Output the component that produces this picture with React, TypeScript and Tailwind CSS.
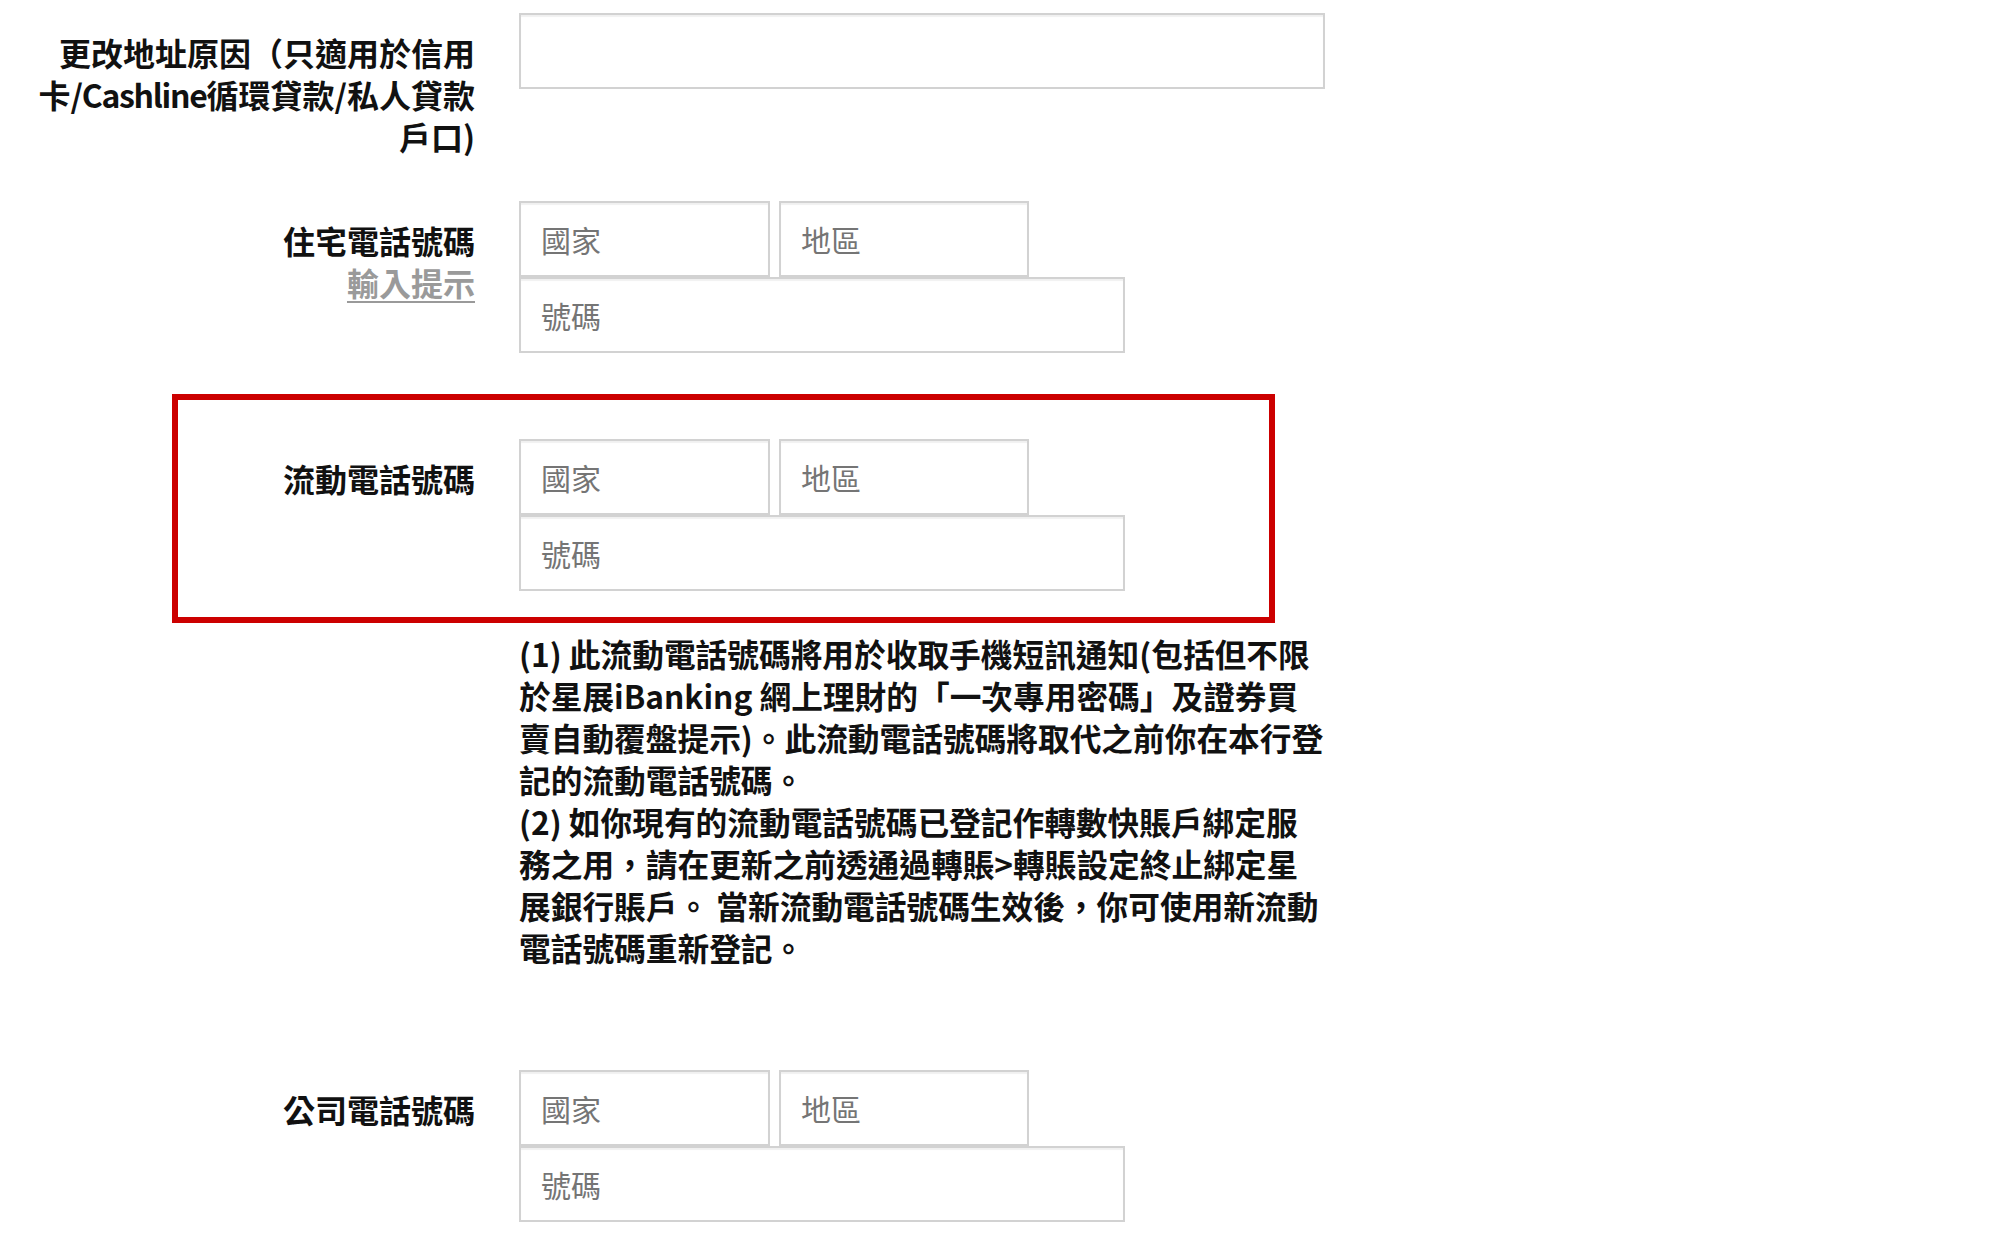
import React from "react";

const font = { fontFamily: '"Noto Sans CJK TC", "Noto Sans", sans-serif' };

const Box = ({ placeholder, className }: { placeholder?: string; className: string }) => (
  <div
    className={`h-[76px] border-2 border-[#d2d2d2] bg-white shadow-[inset_0_2px_1px_rgba(0,0,0,0.06)] flex items-center pl-[20px] text-[30px] text-[#757575] ${className}`}
  >
    {placeholder}
  </div>
);

const PhoneFields = () => (
  <div className="flex flex-col">
    <div className="flex gap-[9px]">
      <Box placeholder="國家" className="w-[251px]" />
      <Box placeholder="地區" className="w-[250px]" />
    </div>
    <Box placeholder="號碼" className="w-[606px]" />
  </div>
);

const Label = ({ children, width = "w-[475px]" }: { children: React.ReactNode; width?: string }) => (
  <div className={`${width} shrink-0 mt-[18px] text-right text-[32px] leading-[42px] font-bold text-[#111]`}>
    {children}
  </div>
);

const notes = [
  "(1) 此流動電話號碼將用於收取手機短訊通知(包括但不限",
  "於星展iBanking 網上理財的「一次專用密碼」及證券買",
  "賣自動覆盤提示)。此流動電話號碼將取代之前你在本行登",
  "記的流動電話號碼。",
  "(2) 如你現有的流動電話號碼已登記作轉數快賬戶綁定服",
  "務之用，請在更新之前透通過轉賬>轉賬設定終止綁定星",
  "展銀行賬戶。 當新流動電話號碼生效後，你可使用新流動",
  "電話號碼重新登記。",
];

export default function App() {
  return (
    <div className="w-[2006px] h-[1254px] bg-white overflow-hidden pt-[13px]" style={font}>
      {/* 更改地址原因 */}
      <div className="flex gap-[44px]">
        <Label>
          更改地址原因（只適用於信用
          <br />
          卡<span className="tracking-[-0.04em]">/Cashline</span>循環貸款/私人貸款
          <br />
          戶口)
        </Label>
        <div className="w-[806px] h-[76px] border-2 border-[#d2d2d2] shadow-[inset_0_2px_1px_rgba(0,0,0,0.06)]" />
      </div>

      {/* 住宅電話號碼 */}
      <div className="flex gap-[44px] mt-[44px]">
        <Label>
          住宅電話號碼
          <div className="text-[#9a9a9a] underline underline-offset-[5px] decoration-2">輸入提示</div>
        </Label>
        <PhoneFields />
      </div>

      {/* 流動電話號碼 */}
      <div className="ml-[172px] w-[1103px] mt-[41px] border-[6px] border-[#cc0000] pt-[39px] pb-[26px]">
        <div className="flex gap-[44px]">
          <Label width="w-[297px]">流動電話號碼</Label>
          <PhoneFields />
        </div>
      </div>

      <div className="ml-[519px] mt-[9px] text-[31.7px] leading-[42px] font-bold text-[#111] whitespace-nowrap">
        {notes.map((line) => (
          <div key={line}>{line}</div>
        ))}
      </div>

      {/* 公司電話號碼 */}
      <div className="flex gap-[44px] mt-[102px]">
        <Label>公司電話號碼</Label>
        <PhoneFields />
      </div>
    </div>
  );
}
